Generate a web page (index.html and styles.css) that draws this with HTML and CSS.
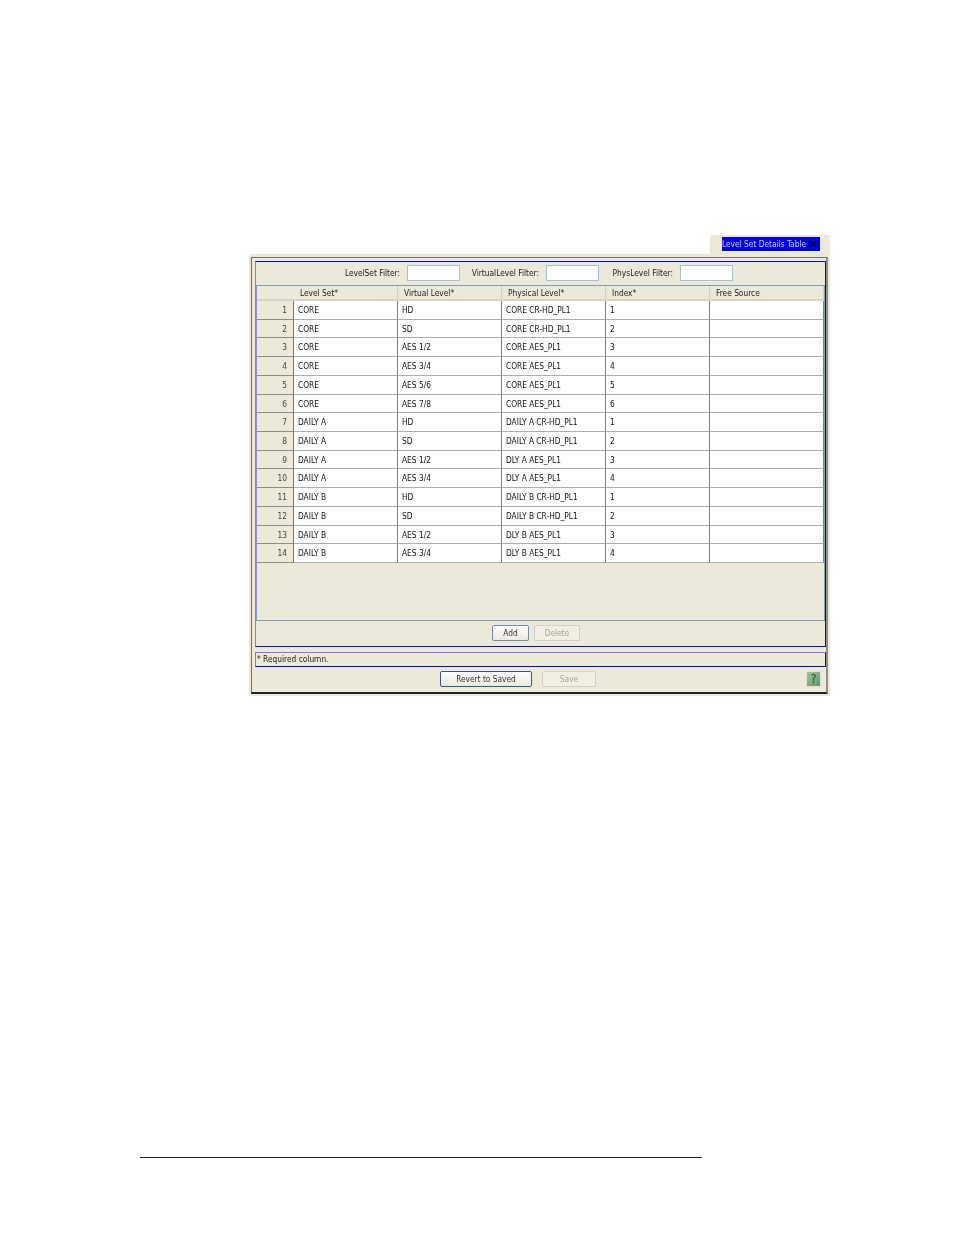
FILE: index.html
```html
<!DOCTYPE html>
<html lang="en">
<head>
<meta charset="utf-8">
<title>Level Set Details Table</title>
<link rel="stylesheet" href="styles.css">
</head>
<body>
<div class="page">
  <div class="window">
    <div class="tabbar"><div class="tab"><div class="tab-title"><span>Level Set Details Table</span><b class="tab-close">×</b></div></div></div>
    <div class="panel">
      <div class="frame">
        <div class="blue-box">
          <div class="filters">
            <label class="filter">LevelSet Filter:<span class="input"></span></label>
            <label class="filter">VirtualLevel Filter:<span class="input"></span></label>
            <label class="filter">PhysLevel Filter:<span class="input"></span></label>
          </div>
          <div class="table">
            <div class="row head">
              <div class="rh"></div><div class="hc">Level Set*</div><div class="hc">Virtual Level*</div><div class="hc">Physical Level*</div><div class="hc">Index*</div><div class="hc">Free Source</div>
            </div>
            <div class="row"><div class="rh">1</div><div class="c">CORE</div><div class="c">HD</div><div class="c">CORE CR-HD_PL1</div><div class="c">1</div><div class="c"></div></div>
            <div class="row"><div class="rh">2</div><div class="c">CORE</div><div class="c">SD</div><div class="c">CORE CR-HD_PL1</div><div class="c">2</div><div class="c"></div></div>
            <div class="row"><div class="rh">3</div><div class="c">CORE</div><div class="c">AES 1/2</div><div class="c">CORE AES_PL1</div><div class="c">3</div><div class="c"></div></div>
            <div class="row"><div class="rh">4</div><div class="c">CORE</div><div class="c">AES 3/4</div><div class="c">CORE AES_PL1</div><div class="c">4</div><div class="c"></div></div>
            <div class="row"><div class="rh">5</div><div class="c">CORE</div><div class="c">AES 5/6</div><div class="c">CORE AES_PL1</div><div class="c">5</div><div class="c"></div></div>
            <div class="row"><div class="rh">6</div><div class="c">CORE</div><div class="c">AES 7/8</div><div class="c">CORE AES_PL1</div><div class="c">6</div><div class="c"></div></div>
            <div class="row"><div class="rh">7</div><div class="c">DAILY A</div><div class="c">HD</div><div class="c">DAILY A CR-HD_PL1</div><div class="c">1</div><div class="c"></div></div>
            <div class="row"><div class="rh">8</div><div class="c">DAILY A</div><div class="c">SD</div><div class="c">DAILY A CR-HD_PL1</div><div class="c">2</div><div class="c"></div></div>
            <div class="row"><div class="rh">9</div><div class="c">DAILY A</div><div class="c">AES 1/2</div><div class="c">DLY A AES_PL1</div><div class="c">3</div><div class="c"></div></div>
            <div class="row"><div class="rh">10</div><div class="c">DAILY A</div><div class="c">AES 3/4</div><div class="c">DLY A AES_PL1</div><div class="c">4</div><div class="c"></div></div>
            <div class="row"><div class="rh">11</div><div class="c">DAILY B</div><div class="c">HD</div><div class="c">DAILY B CR-HD_PL1</div><div class="c">1</div><div class="c"></div></div>
            <div class="row"><div class="rh">12</div><div class="c">DAILY B</div><div class="c">SD</div><div class="c">DAILY B CR-HD_PL1</div><div class="c">2</div><div class="c"></div></div>
            <div class="row"><div class="rh">13</div><div class="c">DAILY B</div><div class="c">AES 1/2</div><div class="c">DLY B AES_PL1</div><div class="c">3</div><div class="c"></div></div>
            <div class="row"><div class="rh">14</div><div class="c">DAILY B</div><div class="c">AES 3/4</div><div class="c">DLY B AES_PL1</div><div class="c">4</div><div class="c"></div></div>
          </div>
          <div class="actions">
            <button class="btn btn-add" type="button">Add</button>
            <button class="btn btn-delete" type="button" disabled>Delete</button>
          </div>
        </div>
        <div class="note">* Required column.</div>
        <div class="footer">
          <button class="btn btn-revert" type="button">Revert to Saved</button>
          <button class="btn btn-save" type="button" disabled>Save</button>
          <span class="help">?</span>
        </div>
      </div>
    </div>
  </div>
  <div class="rule"></div>
</div>
</body>
</html>
```
FILE: styles.css
```css
* { box-sizing: border-box; }
html, body { margin: 0; padding: 0; background: #fff; }
body { font-family: "DejaVu Sans Condensed", "DejaVu Sans", sans-serif; font-size: 8.3px; color: #1c1c1c; }
.page { width: 954px; height: 1235px; padding-top: 235px; overflow: hidden; }
.window { width: 581px; margin-left: 249px; filter: blur(0.25px); }

.tabbar { display: flex; justify-content: flex-end; height: 19px; }
.tab { width: 120px; background: #ece9d8; padding: 2px 10px 3px 12px; }
.tab-title { height: 14px; background: #0000e6; color: #c9d3f5; display: flex; align-items: center; justify-content: space-between; padding-right: 2px; white-space: nowrap; overflow: hidden; }
.tab-close { color: #000; font-family: "DejaVu Sans", sans-serif; font-size: 13px; line-height: 12px; }

.panel { height: 442px; background: #ece9d8; padding: 3px 2px 2px 2px; }
.frame { height: 437px; border: 1px solid #6f6f68; border-bottom: 2px solid #222; border-right: 2px solid #918f82; padding: 3px 0 0 3px; display: flex; flex-direction: column; }
.blue-box { height: 386px; border: 1px solid #0000e0; border-left-color: #7b86e6; display: flex; flex-direction: column; }

.filters { height: 23px; display: grid; grid-template-columns: 114px 123px 118px; column-gap: 16px; align-items: center; padding: 0 0 1px 90px; }
.filter { display: flex; align-items: center; justify-content: flex-end; gap: 7px; white-space: nowrap; }
.input { display: block; flex: none; width: 53px; height: 16px; background: #fff; border: 1px solid #a9bfd3; }

.table { height: 336px; border: 1px solid #7f9db9; border-left: 1px solid #7b9ad6; flex: none; }
.row { display: grid; grid-template-columns: 37px 104px 104px 104px 104px 1fr; height: 18.72px; }
.row.head { height: 15px; }
.hc { padding: 2px 0 0 6px; background: #ece9d8; border-right: 1px solid #d4d0c0; border-bottom: 2px solid #d8d4c4; white-space: nowrap; }
.head .rh { border: 0; border-bottom: 2px solid #d8d4c4; }
.rh { background: #ece9d8; border-right: 1px solid #77766c; border-bottom: 1px solid #8e8d84; text-align: right; padding: 4px 6px 0 0; color: #444; }
.c { background: #fff; border-right: 1px solid #808080; border-bottom: 1px solid #adadad; padding: 4px 0 0 4px; white-space: nowrap; color: #111; }

.actions { flex: 1; display: flex; justify-content: center; align-items: center; gap: 5px; padding: 0 9px 2px 0; }
.btn { font: inherit; height: 16px; padding: 0; border-radius: 2px; background: linear-gradient(#fdfdfb, #ece9e0); color: #333; border: 1px solid #2f5c85; }
.btn:disabled { background: #f1efe4; color: #a5a59a; border-color: #d2d0c3; }
.btn-add { width: 37px; border-color: #6f8fae; }
.btn-delete { width: 46px; }
.btn-revert { width: 92px; }
.btn-save { width: 54px; margin-left: 10px; }

.note { flex: none; height: 15px; margin-top: 5px; border: 1px solid #0000e0; border-top-color: #7478ea; border-left-color: #7478ea; padding: 1px 0 0 1px; }
.footer { flex: 1; display: flex; align-items: flex-start; padding: 4px 0 0 185px; }
.help { width: 15px; height: 16px; margin-left: auto; margin-right: 5px; background: linear-gradient(135deg, #9cc8a2, #5f9568); border: 1px solid #d8e4d0; color: #244a2c; font-size: 12px; line-height: 14px; text-align: center; }

.rule { width: 562px; height: 1px; margin: 461px 0 0 140px; background: #222; }
```
